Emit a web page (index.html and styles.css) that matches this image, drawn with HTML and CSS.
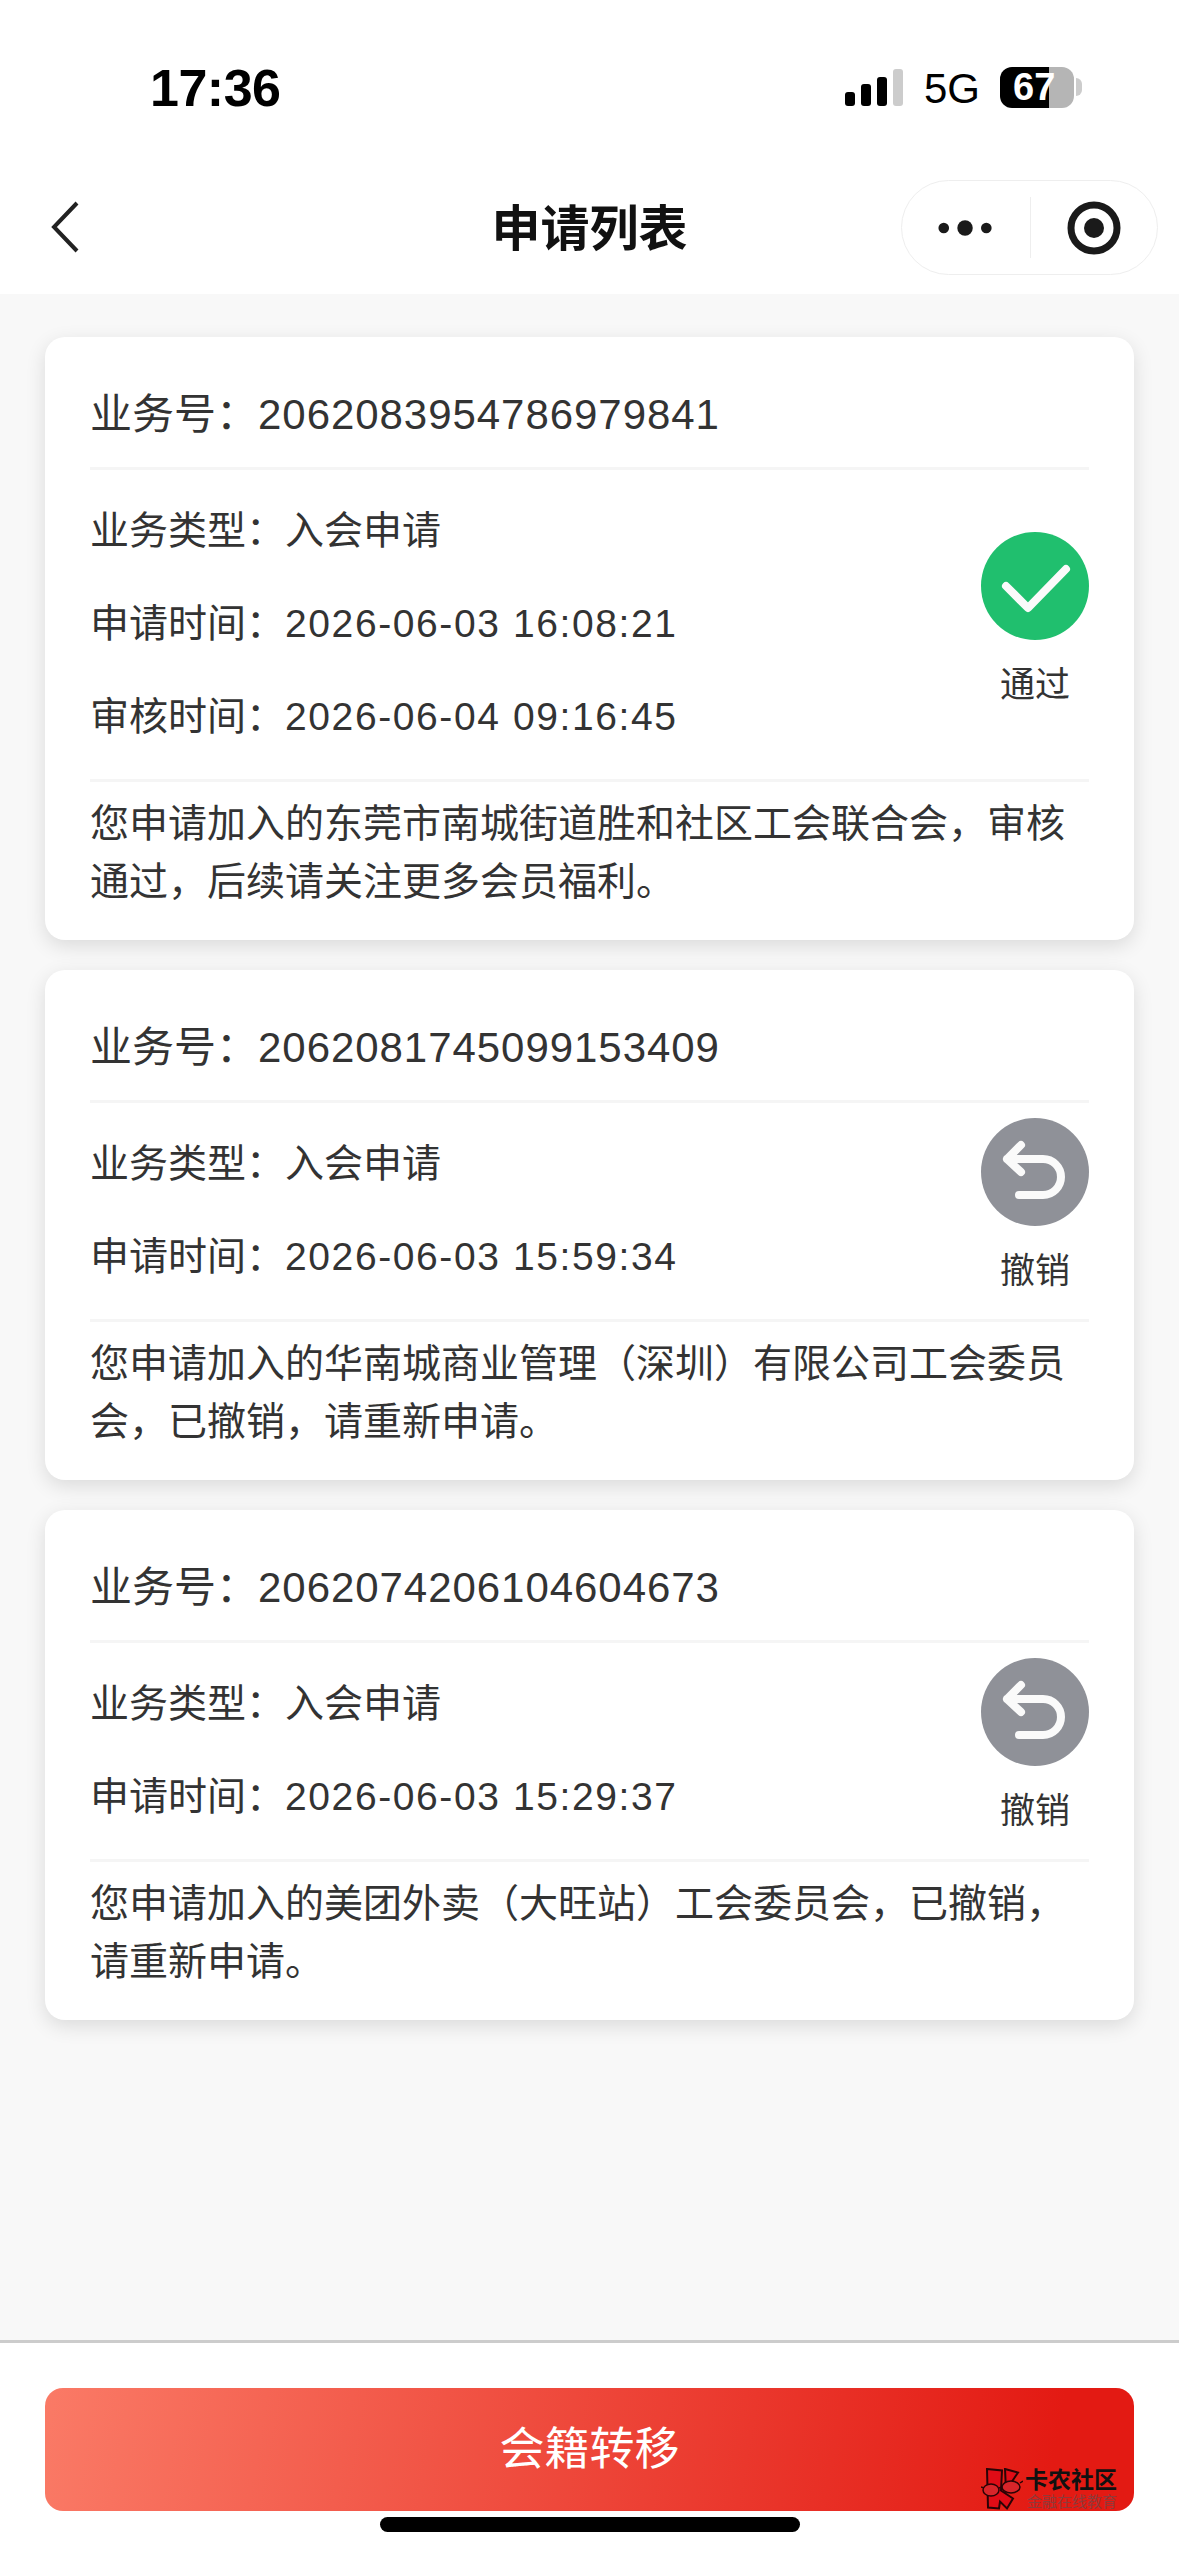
FILE: index.html
```html
<!DOCTYPE html>
<html>
<head>
  <meta charset="UTF-8">
  <title>申请列表</title>
  <link rel="stylesheet" href="styles.css">
</head>
<body>
  <div class="page">
    <div class="top">
      <div class="status-bar">
        <div class="time">17:36</div>
        <div class="status-right">
          <div class="signal"><i class="s1"></i><i class="s2"></i><i class="s3"></i><i class="s4"></i></div>
          <div class="net">5G</div>
          <div class="battery"><span>67</span></div>
          <div class="battery-nub"></div>
        </div>
      </div>
      <div class="nav">
        <svg class="back" viewBox="0 0 30 54"><path d="M27 3L4 27l23 24" /></svg>
        <div class="nav-title">申请列表</div>
        <div class="capsule">
          <svg class="more" viewBox="0 0 60 20"><circle cx="7" cy="10" r="5.5"/><circle cx="29" cy="10" r="8"/><circle cx="51" cy="10" r="5.5"/></svg>
          <div class="capsule-line"></div>
          <svg class="target" viewBox="0 0 54 54"><circle cx="27" cy="27" r="23" class="ring"/><circle cx="27" cy="27" r="10"/></svg>
        </div>
      </div>
    </div>

    <div class="list">
      <div class="card">
        <div class="card-head">业务号：<span class="no">2062083954786979841</span></div>
        <div class="card-body">
          <div class="rows">
            <div class="row">业务类型：入会申请</div>
            <div class="row">申请时间：<span class="date">2026-06-03 16:08:21</span></div>
            <div class="row">审核时间：<span class="date">2026-06-04 09:16:45</span></div>
          </div>
          <div class="state">
            <svg class="state-icon" viewBox="0 0 108 108"><circle cx="54" cy="54" r="54" fill="#20bf6e"/><path d="M25 54l22 22 38-39" class="stroke"/></svg>
            <div class="state-text">通过</div>
          </div>
        </div>
        <div class="card-foot">您申请加入的东莞市南城街道胜和社区工会联合会，审核通过，后续请关注更多会员福利。</div>
      </div>

      <div class="card">
        <div class="card-head">业务号：<span class="no">2062081745099153409</span></div>
        <div class="card-body">
          <div class="rows">
            <div class="row">业务类型：入会申请</div>
            <div class="row">申请时间：<span class="date">2026-06-03 15:59:34</span></div>
          </div>
          <div class="state">
            <svg class="state-icon" viewBox="0 0 108 108"><circle cx="54" cy="54" r="54" fill="#8f9198"/><path d="M40 27L26 41l14 13M26 41h36a18 18 0 0 1 0 36H38" class="stroke"/></svg>
            <div class="state-text">撤销</div>
          </div>
        </div>
        <div class="card-foot">您申请加入的华南城商业管理（深圳）有限公司工会委员会，已撤销，请重新申请。</div>
      </div>

      <div class="card">
        <div class="card-head">业务号：<span class="no">2062074206104604673</span></div>
        <div class="card-body">
          <div class="rows">
            <div class="row">业务类型：入会申请</div>
            <div class="row">申请时间：<span class="date">2026-06-03 15:29:37</span></div>
          </div>
          <div class="state">
            <svg class="state-icon" viewBox="0 0 108 108"><circle cx="54" cy="54" r="54" fill="#8f9198"/><path d="M40 27L26 41l14 13M26 41h36a18 18 0 0 1 0 36H38" class="stroke"/></svg>
            <div class="state-text">撤销</div>
          </div>
        </div>
        <div class="card-foot">您申请加入的美团外卖（大旺站）工会委员会，已撤销，请重新申请。</div>
      </div>
    </div>

    <div class="bottom">
      <div class="btn">会籍转移</div>
    </div>
    <div class="home-bar"></div>

    <div class="watermark">
      <svg class="wm-logo" viewBox="0 0 42 44">
        <path d="M6 1l15 1.500-1 20 12 8-6 10-7-7-1 7-11-1z" fill="#e00c16" stroke="#2a0406" stroke-width="2"/>
        <path d="M24 1l13 3.500-12 18z" fill="#e00c16" stroke="#2a0406" stroke-width="2"/>
        <ellipse cx="10" cy="22" rx="8" ry="6" fill="#d8252a" stroke="#2a0406" stroke-width="1.500"/>
        <ellipse cx="30" cy="19" rx="9" ry="6" fill="#d8252a" stroke="#2a0406" stroke-width="1.500"/>
        <path d="M0 19l3 1M18 20l3-1M39 15l3-2" stroke="#2a0406" stroke-width="1.500"/>
      </svg>
      <div class="wm-text">
        <div class="wm-name">卡农社区</div>
        <div class="wm-sub">金融在线教育</div>
      </div>
    </div>
  </div>
</body>
</html>
```
FILE: styles.css
```css
* { box-sizing: border-box; }
html, body { margin: 0; padding: 0; }
body { font-family: "Liberation Sans", "Noto Sans CJK SC", sans-serif; color: #333; background: #f8f8f8; }
.page { position: relative; width: 1179px; height: 2556px; display: flex; flex-direction: column; overflow: hidden; }

.top { background: #fff; height: 294px; flex: none; }
.status-bar { height: 180px; display: flex; justify-content: space-between; padding: 60px 97px 0 150px; color: #000; }
.time { font-size: 52px; font-weight: bold; line-height: 56px; letter-spacing: -0.5px; }
.status-right { display: flex; align-items: flex-start; height: 48px; padding-top: 7px; }
.signal { display: flex; align-items: flex-end; gap: 6px; height: 37px; margin-top: 2px; }
.signal i { display: block; width: 10px; background: #000; border-radius: 3px; }
.signal .s1 { height: 14px; }
.signal .s2 { height: 22px; }
.signal .s3 { height: 29px; }
.signal .s4 { height: 37px; background: #ccc; }
.net { font-size: 42px; line-height: 44px; margin: 0 20px 0 21px; }
.battery { width: 74px; height: 41px; border-radius: 12px; background: linear-gradient(90deg, #000 66%, #b5b5b5 66%); color: #fff; font-size: 38px; font-weight: bold; line-height: 41px; padding-left: 13px; }
.battery-nub { width: 6px; height: 18px; margin: 11px 0 0 2px; background: #ccc; border-radius: 0 6px 6px 0; }

.nav { position: relative; height: 114px; display: flex; align-items: center; justify-content: center; }
.back { position: absolute; left: 50px; top: 20px; width: 30px; height: 54px; fill: none; stroke: #222; stroke-width: 4; }
.nav-title { font-size: 49px; font-weight: bold; color: #111; line-height: 94px; margin-top: -16px; }
.capsule { position: absolute; right: 21px; top: 0; width: 257px; height: 95px; border: 1px solid #eee; border-radius: 48px; display: flex; align-items: center; background: #fff; }
.more { width: 58px; height: 20px; margin-left: 35px; fill: #1a1a1a; }
.capsule-line { width: 1px; height: 61px; background: #eee; margin-left: 35px; }
.target { width: 54px; height: 54px; margin-left: 36px; fill: #1a1a1a; }
.target .ring { fill: none; stroke: #1a1a1a; stroke-width: 7; }

.list { padding: 43px 45px 0; display: flex; flex-direction: column; gap: 30px; }
.card { background: #fff; border-radius: 20px; padding: 0 45px; box-shadow: 0 6px 20px rgba(0, 0, 0, 0.12); }
.card-head { height: 130px; padding-top: 30px; font-size: 42px; line-height: 96px; }
.no { letter-spacing: 0.95px; }
.card-body { display: flex; align-items: center; justify-content: space-between; border-top: 3px solid #f5f5f5; border-bottom: 3px solid #f5f5f5; padding: 14px 0 16px; }
.row { font-size: 39px; line-height: 93px; }
.date { letter-spacing: 1.6px; }
.state { width: 108px; display: flex; flex-direction: column; align-items: center; margin-top: -6px; }
.state-icon { width: 108px; height: 108px; display: block; }
.stroke { fill: none; stroke: #fafafa; stroke-width: 8; stroke-linecap: round; stroke-linejoin: round; }
.state-text { font-size: 35px; line-height: 50px; margin-top: 20px; white-space: nowrap; }
.card-foot { font-size: 39px; line-height: 58px; padding: 13px 0 29px; }

.bottom { margin-top: auto; height: 216px; background: #fff; border-top: 3px solid #ccc; padding: 45px 45px 0; }
.btn { height: 123px; border-radius: 18px; background: linear-gradient(100deg, #fa7a66, #e31a13 92%); color: #fff; font-size: 45px; line-height: 123px; text-align: center; }
.home-bar { position: absolute; left: 380px; top: 2517px; width: 420px; height: 15px; border-radius: 8px; background: #000; }

.watermark { position: absolute; left: 981px; top: 2468px; display: flex; gap: 2px; }
.wm-logo { width: 42px; height: 44px; }
.wm-name { font-size: 23px; font-weight: bold; line-height: 25px; color: #111; white-space: nowrap; }
.wm-sub { font-size: 15px; line-height: 18px; color: #8f3a3a; white-space: nowrap; margin-left: 2px; }
```
